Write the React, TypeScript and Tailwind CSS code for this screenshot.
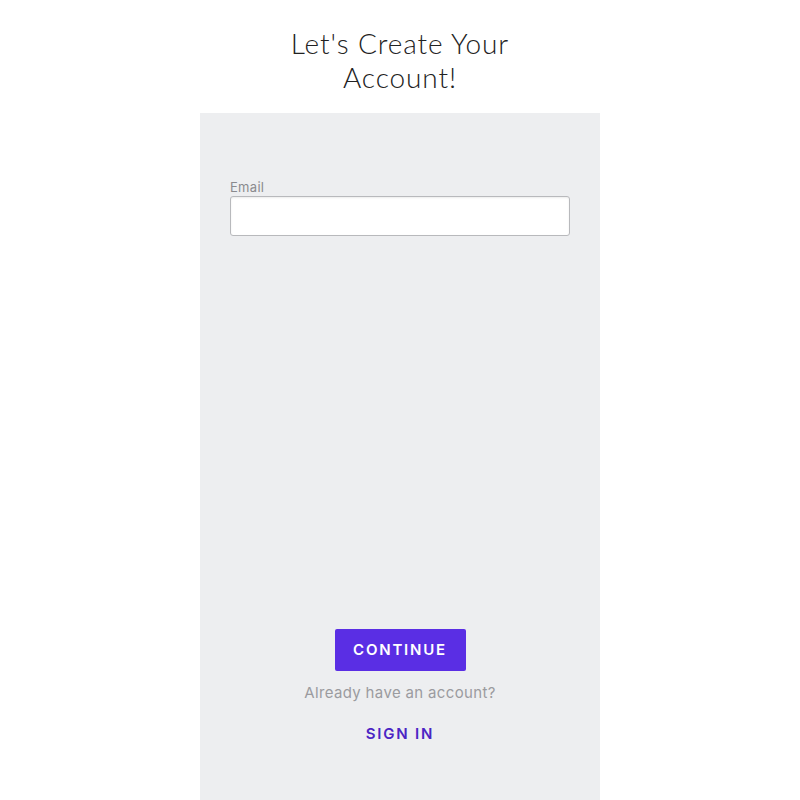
export default function App() {
  return (
    <div className="min-h-[800px] bg-white flex flex-col items-center font-['Inter',sans-serif]">
      {/* Heading */}
      <h1 className="pt-[26px] h-[113px] text-center font-['Lato',sans-serif] text-[28px] leading-[34px] font-light text-[#222] tracking-[0.9px]">
        Let's Create Your
        <br />
        Account!
      </h1>

      {/* Form panel */}
      <div className="w-[400px] h-[687px] bg-[#edeef0] flex flex-col px-[30px]">
        <label className="mt-[66px] text-[13px] leading-[16px] tracking-[0.3px] text-[#8a8a8e]">Email</label>
        <input
          type="email"
          className="mt-[1px] h-[40px] w-full bg-white border border-[#b8b9bc] rounded-[3px] shadow-[inset_0_1px_2px_rgba(0,0,0,0.08)] outline-none px-2"
        />

        <div className="mt-auto mb-[55px] flex flex-col items-center">
          <button className="w-[131px] h-[42px] bg-[#5a2ee4] rounded-[2px] text-white text-[15px] font-semibold tracking-[1.8px]">
            CONTINUE
          </button>
          <p className="mt-[12px] text-[15px] leading-[20px] tracking-[0.35px] text-[#9b9b9f]">Already have an account?</p>
          <button className="mt-[20px] text-[15px] leading-[22px] font-semibold tracking-[1.8px] text-[#4b24c4]">
            SIGN IN
          </button>
        </div>
      </div>
    </div>
  );
}
